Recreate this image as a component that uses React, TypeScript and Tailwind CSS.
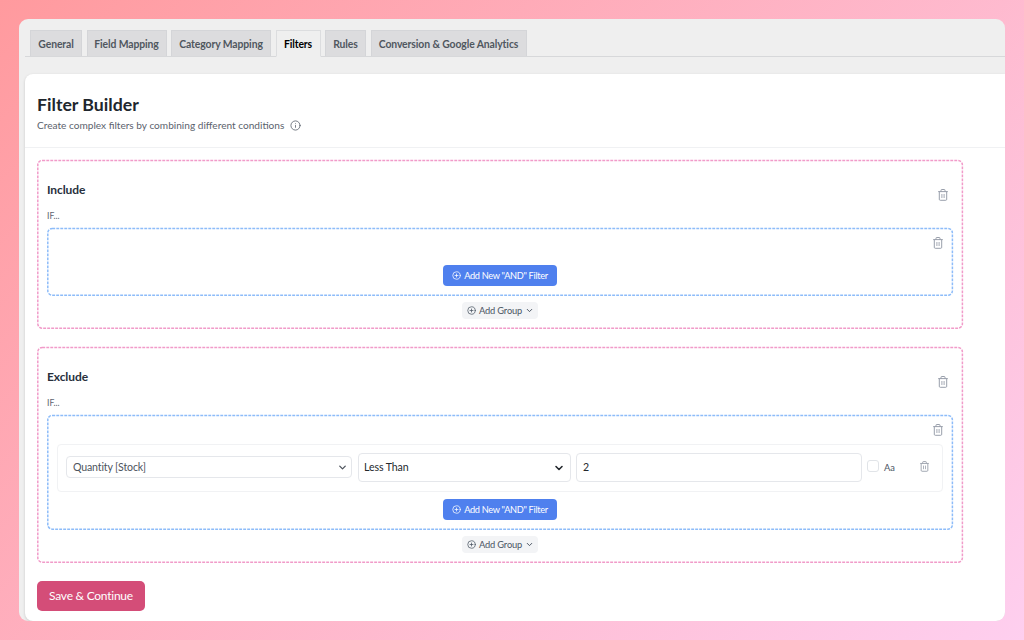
import type { ReactNode } from 'react';
import clsx from 'clsx';
import { ChevronDown, CirclePlus, Info } from 'lucide-react';

const TABS = [
  { label: 'General', width: 'w-[52px]' },
  { label: 'Field Mapping', width: 'w-[80px]' },
  { label: 'Category Mapping', width: 'w-[100px]' },
  { label: 'Filters', width: 'w-[45px]' },
  { label: 'Rules', width: 'w-[41px]' },
  { label: 'Conversion & Google Analytics', width: 'w-[156px]' },
];

const ACTIVE_TAB = 'Filters';

interface DashedBoxProps {
  className?: string;
  stroke: string;
  children: ReactNode;
}

/** Panel with a fine dashed outline */
function DashedBox({ className, stroke, children }: DashedBoxProps) {
  return (
    <div className={clsx('relative', className)}>
      <svg className={clsx('pointer-events-none absolute inset-0 h-full w-full overflow-visible', stroke)}>
        <rect
          className="h-[calc(100%-1.2px)] w-[calc(100%-1.4px)]"
          x="0.8"
          y="0.4"
          rx="4.5"
          fill="none"
          stroke="currentColor"
          strokeWidth="1.5"
          strokeDasharray="2.9 1.1"
        />
      </svg>
      {children}
    </div>
  );
}

function TrashIcon({ className }: { className?: string }) {
  return (
    <svg className={className} viewBox="0 0 10 12" fill="none" stroke="currentColor" strokeWidth="0.9">
      <path d="M0.2 2.6h9.6M3 2.4V1.3q0-.8.8-.8h2.4q.8 0 .8.8v1.1M1.3 2.8v7.5q0 1 1 1h5.4q1 0 1-1V2.8" />
      <path d="M3.9 5v4M6.1 5v4" strokeWidth="0.8" />
    </svg>
  );
}

function AddFilterButton() {
  return (
    <button className="flex h-[21px] w-[114px] items-center justify-center gap-[3px] rounded-[4px] bg-[#4f80ee] text-[9.2px] tracking-[-0.3px] text-white">
      <CirclePlus className="size-[9px]" strokeWidth={2} />
      Add New "AND" Filter
    </button>
  );
}

function AddGroupButton() {
  return (
    <button className="flex h-[17px] w-[76px] items-center justify-center gap-[2.5px] rounded-[4px] bg-[#f3f4f6] pl-px text-[9.3px] tracking-[-0.15px] text-[#4b5563]">
      <CirclePlus className="size-[9px]" strokeWidth={2} />
      Add Group
      <ChevronDown className="size-[9px]" strokeWidth={2.6} />
    </button>
  );
}

interface FilterSectionProps {
  title: string;
  className: string;
  innerClassName: string;
  children?: ReactNode;
}

function FilterSection({ title, className, innerClassName, children }: FilterSectionProps) {
  return (
    <DashedBox stroke="text-[#f19bc9]" className={clsx('flex w-[926px] flex-col px-2.5', className)}>
      <div className="flex h-[50px] items-start justify-between pt-[22px]">
        <h2 className="text-[12px] leading-4 font-bold tracking-[-0.1px] text-[#28303d]">{title}</h2>
        <TrashIcon className="mt-[6.5px] mr-[5px] h-3 w-2.5 text-[#8d94a1]" />
      </div>
      <div className="h-[18px] text-[8.6px] leading-[13px] text-[#5d6470]">IF...</div>
      <DashedBox stroke="text-[#8dbcf9]" className={clsx('flex flex-col items-center', innerClassName)}>
        <div className="flex h-[29px] w-full shrink-0 justify-end pt-[9.2px] pr-[10.5px]">
          <TrashIcon className="h-3 w-2.5 text-[#8d94a1]" />
        </div>
        {children}
        <AddFilterButton />
      </DashedBox>
      <div className="mt-[6px] flex justify-center">
        <AddGroupButton />
      </div>
    </DashedBox>
  );
}

function ConditionRow() {
  return (
    <div className="mb-[7px] flex h-12 w-[886px] shrink-0 items-center rounded-[4px] border border-[#f1f2f4] pb-[2px] pl-2 text-[10.6px]">
      <div className="flex h-[22px] w-[286px] items-center justify-between rounded-[4px] border border-[#e5e7eb] pt-px pr-[3px] pl-[6px] tracking-[-0.15px] text-[#4d535c]">
        Quantity [Stock]
        <ChevronDown className="size-[11px]" strokeWidth={2.8} />
      </div>
      <div className="ml-1.5 flex h-[29px] w-[213px] items-center justify-between rounded-[4px] border border-[#e5e7eb] pt-px pr-[5px] pl-[5px] tracking-[-0.1px] text-[#24282d]">
        Less Than
        <ChevronDown className="size-[12px]" strokeWidth={3.2} />
      </div>
      <div className="ml-[5px] flex h-[29px] w-[286px] items-center rounded-[4px] border border-[#e5e7eb] pt-px pl-[6px] text-[#24282d]">
        2
      </div>
      <span className="mb-[3px] ml-[5px] size-3 rounded-[3px] border border-[#e1e4e8]" />
      <span className="mt-px ml-[5px] text-[9.3px] tracking-[-0.1px] text-[#4b5563]">Aa</span>
      <TrashIcon className="mb-[2px] ml-[25px] h-[11px] w-[9px] text-[#8d94a1]" />
    </div>
  );
}

export default function App() {
  return (
    <div className="h-[640px] w-[1024px] bg-linear-[135deg,#ff9a9e,#fecfef] pt-[19px] pl-[19px] font-['Lato',sans-serif]">
      <div className="flex h-[602px] w-[986px] flex-col overflow-hidden rounded-[9px] bg-[#efefef] pl-1.5">
        <nav className="flex h-[38px] shrink-0 items-end gap-[4.5px] border-b border-[#d7d8da] pl-[5px]">
          {TABS.map((tab) => (
            <div
              key={tab.label}
              className={clsx(
                'flex shrink-0 items-center justify-center border pt-[2px] text-[10.4px] font-bold tracking-[-0.1px] whitespace-nowrap',
                tab.width,
                tab.label === ACTIVE_TAB
                  ? '-mb-px h-[27px] border-[#dcdddf] border-b-[#efefef] bg-[#efefef] text-black'
                  : 'h-[26px] border-[#d4d5d8] border-b-0 bg-[#dcdcde] text-[#50575e]',
              )}
            >
              {tab.label}
            </div>
          ))}
        </nav>
        <main className="mt-[17px] flex-1 rounded-l-[8px] bg-white shadow-[0_1px_3px_rgba(0,0,0,0.16)]">
          <header className="h-[74px] border-b border-[#f0f1f3] pt-5 pl-3">
            <h1 className="text-[17.7px] leading-[22px] font-bold text-[#20262d]">Filter Builder</h1>
            <p className="mt-[2px] flex items-center text-[10.1px] leading-[15px] text-[#5b626d]">
              Create complex filters by combining different conditions
              <Info className="ml-[6px] size-[11px]" strokeWidth={1.8} />
            </p>
          </header>
          <div className="pt-3 pl-3">
            <FilterSection title="Include" className="h-[169px]" innerClassName="h-[68px] [&>button]:mt-[8px]" />
            <FilterSection title="Exclude" className="mt-[18px] h-[216px]" innerClassName="h-[115px]">
              <ConditionRow />
            </FilterSection>
            <button className="mt-[18px] flex h-[30px] w-[108px] items-center justify-center rounded-[5px] bg-[#d44d78] text-[12px] tracking-[-0.25px] text-white">
              Save & Continue
            </button>
          </div>
        </main>
      </div>
    </div>
  );
}
